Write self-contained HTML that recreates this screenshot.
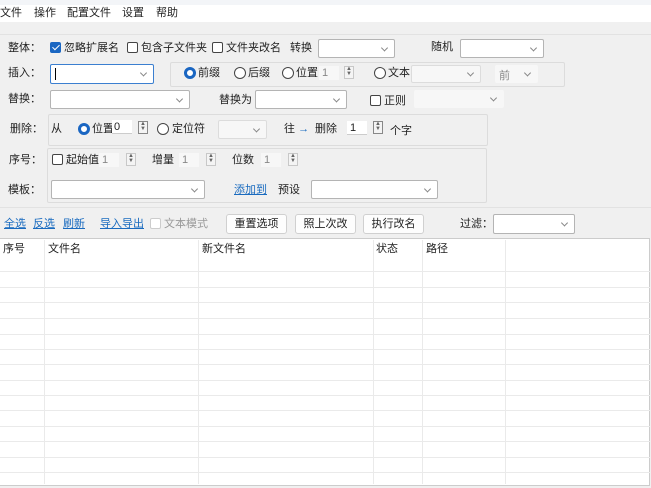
<!DOCTYPE html><html><head><meta charset="utf-8"><style>
*{box-sizing:border-box;margin:0;padding:0}
body{width:651px;height:488px;background:#f0f0f0;font-family:"Liberation Sans","Noto Sans CJK SC",sans-serif;font-size:11px;color:#222;position:relative;overflow:hidden}
.a{position:absolute;white-space:nowrap;line-height:14px}
.box{position:absolute;background:#fff;border:1px solid #b4b4b4;border-radius:2px}
.box.dis{background:#f7f7f7;border-color:#dcdcdc}
.box::after{content:"";position:absolute;right:7px;top:50%;width:4px;height:4px;border-right:1px solid #888;border-bottom:1px solid #888;transform:translateY(-70%) rotate(45deg)}
.cb{position:absolute;width:11px;height:11px;border:1px solid #444;border-radius:2px;background:#fff}
.cb.on{background:#1a66c2;border-color:#1a66c2}
.cb.on::after{content:"";position:absolute;left:3px;top:0px;width:3px;height:6px;border-right:1.5px solid #fff;border-bottom:1.5px solid #fff;transform:rotate(45deg)}
.rb{position:absolute;width:12px;height:12px;border:1px solid #444;border-radius:50%;background:#fff}
.rb.on{border:3.5px solid #1a66c2}
.grp{position:absolute;border:1px solid #dcdcdc;border-radius:2px}
.sp{position:absolute;width:10px;height:13px;border:1px solid #c8c8c8;background:#f4f4f4;font-size:6px;line-height:5px;text-align:center;color:#666}
.num{position:absolute;height:14px;background:#f7f7f7;color:#888;line-height:14px;padding-left:3px}
.lnk{color:#1a6bbf;text-decoration:underline}
.btn{position:absolute;height:20px;background:#fdfdfd;border:1px solid #d0d0d0;border-radius:3px;text-align:center;line-height:18px}
.vl{position:absolute;top:240px;height:244px;width:1px;background:#eaeaea}
.hl{position:absolute;left:0;width:650px;height:1px;background:#eaeaea}
</style></head><body>
<div style="position:absolute;left:0;top:0;width:651px;height:5px;background:#f3f5f8"></div>
<div style="position:absolute;left:0;top:5px;width:651px;height:17px;background:#fff"></div>
<div class="a" style="left:0;top:6px">文件</div>
<div class="a" style="left:34px;top:6px">操作</div>
<div class="a" style="left:67px;top:6px">配置文件</div>
<div class="a" style="left:122px;top:6px">设置</div>
<div class="a" style="left:156px;top:6px">帮助</div>
<div style="position:absolute;left:0;top:34px;width:651px;height:1px;background:#e2e2e2"></div>

<div class="a" style="left:8px;top:41px">整体：</div>
<div class="cb on" style="left:50px;top:42px"></div><div class="a" style="left:64px;top:41px">忽略扩展名</div>
<div class="cb" style="left:127px;top:42px"></div><div class="a" style="left:141px;top:41px">包含子文件夹</div>
<div class="cb" style="left:212px;top:42px"></div><div class="a" style="left:226px;top:41px">文件夹改名</div>
<div class="a" style="left:290px;top:41px">转换</div>
<div class="box" style="left:318px;top:39px;width:77px;height:19px"></div>
<div class="a" style="left:431px;top:40px">随机</div>
<div class="box" style="left:460px;top:39px;width:84px;height:19px"></div>

<div class="a" style="left:8px;top:66px">插入：</div>
<div class="box" style="left:50px;top:64px;width:104px;height:20px;border-color:#3b7fd0"><div style="position:absolute;left:4px;top:3px;width:1px;height:12px;background:#000"></div></div>
<div class="grp" style="left:170px;top:62px;width:395px;height:25px"></div>
<div class="rb on" style="left:184px;top:67px"></div><div class="a" style="left:198px;top:66px">前缀</div>
<div class="rb" style="left:234px;top:67px"></div><div class="a" style="left:248px;top:66px">后缀</div>
<div class="rb" style="left:282px;top:67px"></div><div class="a" style="left:296px;top:66px">位置</div>
<div class="num" style="left:319px;top:66px;width:20px">1</div>
<div class="sp" style="left:344px;top:66px">▲<br>▼</div>
<div class="rb" style="left:374px;top:67px"></div><div class="a" style="left:388px;top:66px">文本</div>
<div class="box dis" style="left:411px;top:65px;width:70px;height:18px"></div>
<div class="box dis" style="left:495px;top:65px;width:43px;height:18px;border-color:#f7f7f7"><span style="position:absolute;left:3px;top:1px;color:#888">前</span></div>

<div class="a" style="left:8px;top:92px">替换：</div>
<div class="box" style="left:50px;top:90px;width:140px;height:19px"></div>
<div class="a" style="left:219px;top:93px">替换为</div>
<div class="box" style="left:255px;top:90px;width:92px;height:19px"></div>
<div class="cb" style="left:370px;top:95px"></div><div class="a" style="left:384px;top:94px">正则</div>
<div class="box dis" style="left:414px;top:90px;width:90px;height:18px;border-color:#f7f7f7"></div>

<div class="grp" style="left:48px;top:114px;width:440px;height:32px"></div>
<div class="a" style="left:10px;top:122px">删除：</div>
<div class="a" style="left:51px;top:122px">从</div>
<div class="rb on" style="left:78px;top:123px"></div><div class="a" style="left:92px;top:122px">位置</div>
<div style="position:absolute;left:112px;top:120px;width:20px;height:14px;background:#fff;border-bottom:1px solid #ccc;line-height:14px;padding-left:2px">0</div>
<div class="sp" style="left:138px;top:121px;border-color:#888">▲<br>▼</div>
<div class="rb" style="left:157px;top:123px"></div><div class="a" style="left:172px;top:122px">定位符</div>
<div class="box dis" style="left:218px;top:120px;width:49px;height:19px"></div>
<div class="a" style="left:284px;top:122px">往 <span style="color:#1a6bbf">→</span></div>
<div class="a" style="left:315px;top:122px">删除</div>
<div style="position:absolute;left:347px;top:121px;width:20px;height:14px;background:#fff;border-bottom:1px solid #ccc;line-height:14px;padding-left:3px">1</div>
<div class="sp" style="left:373px;top:121px;border-color:#888">▲<br>▼</div>
<div class="a" style="left:390px;top:124px">个字</div>

<div class="grp" style="left:47px;top:148px;width:440px;height:55px"></div>
<div class="a" style="left:9px;top:153px">序号：</div>
<div class="cb" style="left:52px;top:154px"></div><div class="a" style="left:66px;top:153px">起始值</div>
<div class="num" style="left:99px;top:153px;width:20px">1</div>
<div class="sp" style="left:126px;top:153px">▲<br>▼</div>
<div class="a" style="left:152px;top:153px">增量</div>
<div class="num" style="left:179px;top:153px;width:20px">1</div>
<div class="sp" style="left:206px;top:153px">▲<br>▼</div>
<div class="a" style="left:232px;top:153px">位数</div>
<div class="num" style="left:261px;top:153px;width:20px">1</div>
<div class="sp" style="left:288px;top:153px">▲<br>▼</div>
<div class="a" style="left:8px;top:183px">模板：</div>
<div class="box" style="left:51px;top:180px;width:154px;height:19px"></div>
<div class="a lnk" style="left:234px;top:183px">添加到</div>
<div class="a" style="left:278px;top:183px">预设</div>
<div class="box" style="left:311px;top:180px;width:127px;height:19px"></div>
<div style="position:absolute;left:0;top:207px;width:651px;height:1px;background:#e2e2e2"></div>

<div class="a lnk" style="left:4px;top:217px">全选</div>
<div class="a lnk" style="left:33px;top:217px">反选</div>
<div class="a lnk" style="left:63px;top:217px">刷新</div>
<div class="a lnk" style="left:100px;top:217px">导入导出</div>
<div class="cb" style="left:150px;top:218px;border-color:#ccc"></div><div class="a" style="left:164px;top:217px;color:#999">文本模式</div>
<div class="btn" style="left:226px;top:214px;width:61px">重置选项</div>
<div class="btn" style="left:295px;top:214px;width:61px">照上次改</div>
<div class="btn" style="left:363px;top:214px;width:61px">执行改名</div>
<div class="a" style="left:460px;top:217px">过滤：</div>
<div class="box" style="left:493px;top:214px;width:82px;height:20px"></div>

<div style="position:absolute;left:0;top:238px;width:650px;height:248px;background:#fff;border:1px solid #ccc;border-left:none"></div>
<div class="vl" style="left:44px"></div><div class="vl" style="left:198px"></div><div class="vl" style="left:373px"></div><div class="vl" style="left:422px"></div><div class="vl" style="left:505px"></div>
<div class="hl" style="top:271px"></div><div class="hl" style="top:287px"></div><div class="hl" style="top:302px"></div><div class="hl" style="top:318px"></div><div class="hl" style="top:334px"></div><div class="hl" style="top:349px"></div><div class="hl" style="top:364px"></div><div class="hl" style="top:380px"></div><div class="hl" style="top:395px"></div><div class="hl" style="top:410px"></div><div class="hl" style="top:426px"></div><div class="hl" style="top:441px"></div><div class="hl" style="top:457px"></div><div class="hl" style="top:472px"></div>
<div class="a" style="left:3px;top:242px">序号</div>
<div class="a" style="left:48px;top:242px">文件名</div>
<div class="a" style="left:202px;top:242px">新文件名</div>
<div class="a" style="left:376px;top:242px">状态</div>
<div class="a" style="left:426px;top:242px">路径</div>
</body></html>
